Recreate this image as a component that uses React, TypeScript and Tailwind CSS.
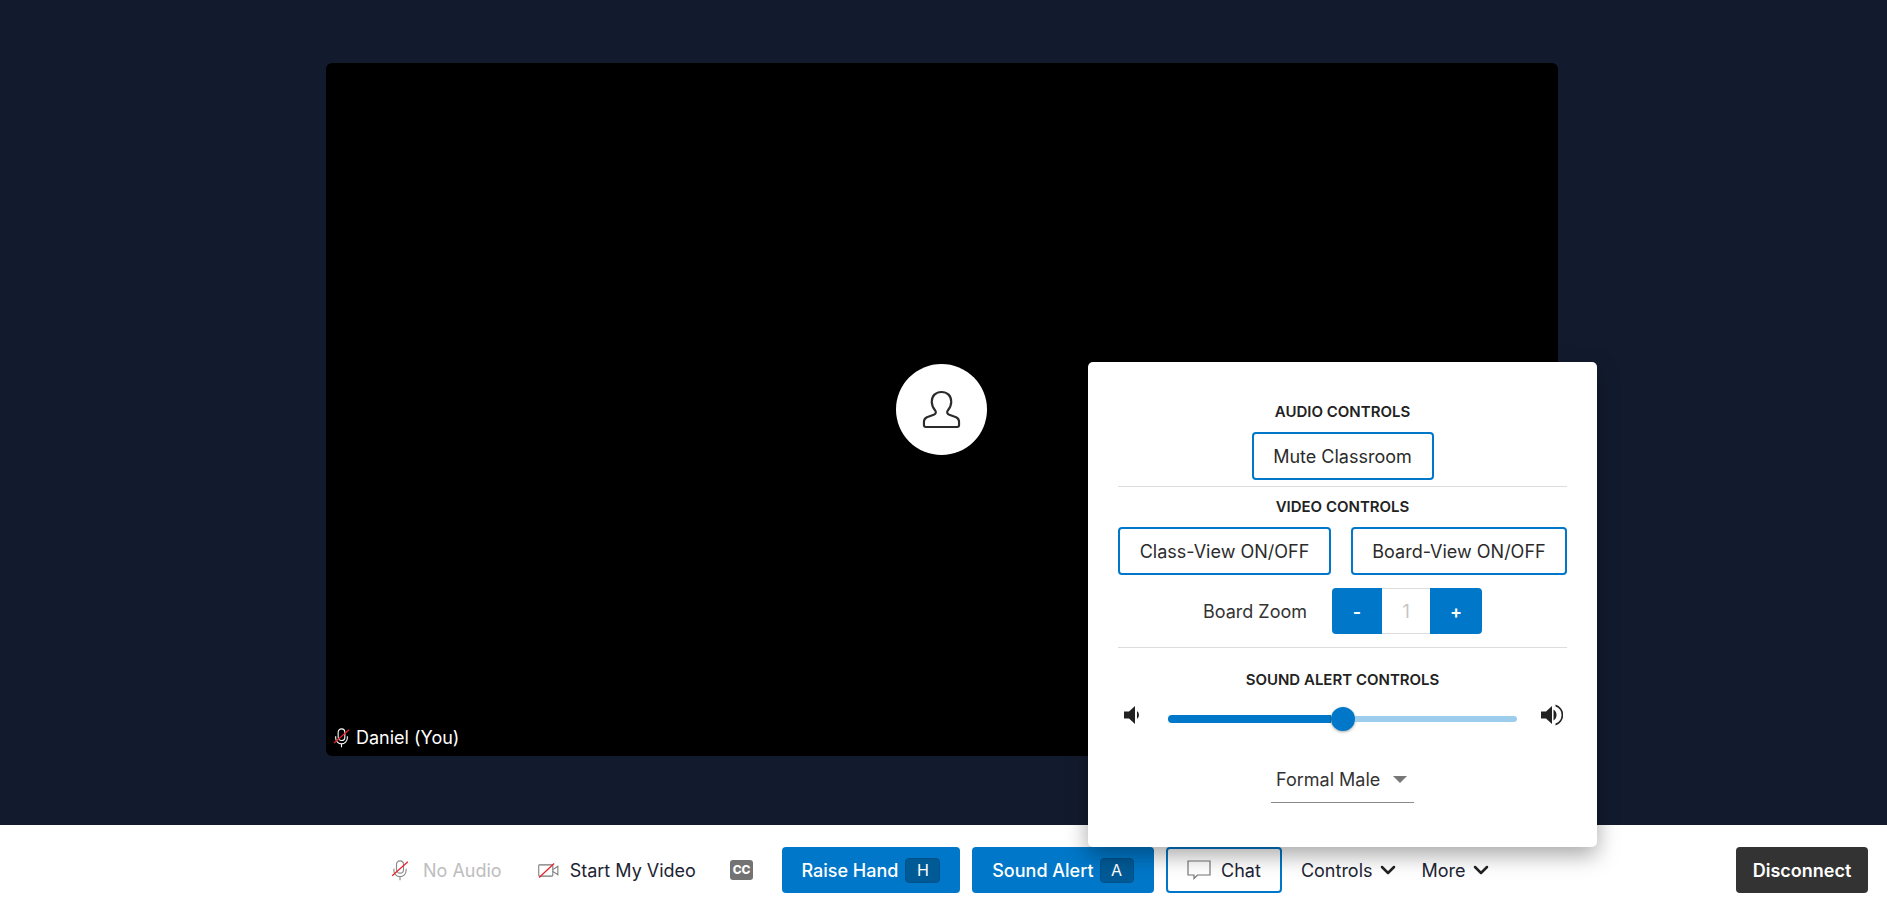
import React from 'react';
import { ChevronDown } from 'lucide-react';

const font = { fontFamily: 'Inter, "Noto Sans", sans-serif' };

function MicOff({ color = '#6b6b6b', className = '' }: { color?: string; className?: string }) {
    return (
        <svg viewBox="0 0 20 24" className={className} fill="none">
            <rect x="6" y="1" width="8" height="14" rx="4" stroke={color} strokeWidth="1.3" />
            <path d="M3 10v2a7 7 0 0 0 14 0v-2M10 19v4" stroke={color} strokeWidth="1.3" />
            <path d="M1 18 19 2" stroke="#e8202a" strokeWidth="1.5" />
        </svg>
    );
}

function SpeakerIcon({ loud }: { loud?: boolean }) {
    return (
        <svg viewBox="0 0 24 24" className="w-[24px] h-[24px]" fill="#222">
            <path d="M2 8.5h5L13 3v18l-6-5.500H2z" />
            {loud ? (
                <path d="M15 6.500a6.500 6.500 0 0 1 0 11zM17 1.500a11 11 0 0 1 0 21v-2a9 9 0 0 0 0-17z" transform="translate(-0.500 0)" />
            ) : (
                <path d="M15 8a5 5 0 0 1 0 8z" />
            )}
        </svg>
    );
}

function OutlineButton({ children, className = '' }: { children: React.ReactNode; className?: string }) {
    return (
        <button className={`h-[48px] border-2 border-[#0077c8] rounded-[4px] bg-white text-[18px] text-[#2b2b2b] flex items-center justify-center ${className}`}>
            {children}
        </button>
    );
}

function Heading({ children }: { children: React.ReactNode }) {
    return <h3 className="text-[15px] leading-[20px] font-semibold text-[#222] text-center">{children}</h3>;
}

function ControlsPopup() {
    return (
        <div className="absolute left-[1088px] top-[362px] w-[509px] h-[485px] bg-white rounded-[5px] px-[30px] pt-[40px] shadow-[0_8px_22px_rgba(0,0,0,0.35)] z-10">
            <Heading>AUDIO CONTROLS</Heading>
            <div className="flex justify-center mt-[10px]">
                <OutlineButton className="w-[182px]">Mute Classroom</OutlineButton>
            </div>
            <div className="h-px bg-[#dddddd] mt-[6px]" />
            <div className="mt-[10px]">
                <Heading>VIDEO CONTROLS</Heading>
            </div>
            <div className="flex gap-[20px] mt-[10px]">
                <OutlineButton className="w-[213px]">Class-View ON/OFF</OutlineButton>
                <OutlineButton className="w-[216px]">Board-View ON/OFF</OutlineButton>
            </div>
            <div className="flex items-center justify-center mt-[13px] gap-[25px]">
                <span className="text-[18px] text-[#333]">Board Zoom</span>
                <div className="flex h-[46px] w-[150px] text-[18px] font-semibold">
                    <button className="w-[50px] bg-[#0077c8] text-white rounded-l-[4px]">-</button>
                    <div className="w-[48px] border-y border-[#dddddd] flex items-center justify-center text-[#c4c4c4] font-normal">1</div>
                    <button className="w-[52px] bg-[#0077c8] text-white rounded-r-[4px]">+</button>
                </div>
            </div>
            <div className="h-px bg-[#dddddd] mt-[13px]" />
            <div className="mt-[22px]">
                <Heading>SOUND ALERT CONTROLS</Heading>
            </div>
            <div className="flex items-center mt-[17px] h-[24px]">
                <div className="w-[24px] ml-[4px] -mt-[8px]"><SpeakerIcon /></div>
                <div className="flex items-center ml-[22px] w-[349px]">
                    <div className="h-[8px] w-[163px] bg-[#0077c8] rounded-l-full" />
                    <div className="w-[24px] h-[24px] rounded-full bg-[#0077c8] shadow-[0_1px_3px_rgba(0,0,0,0.35)] shrink-0" />
                    <div className="h-[6px] flex-1 bg-[#9dcdec] rounded-r-full" />
                </div>
                <div className="w-[24px] ml-[22px] -mt-[8px]"><SpeakerIcon loud /></div>
            </div>
            <div className="flex justify-center mt-[26px]">
                <div className="w-[143px] h-[46px] border-b border-[#8a8a8a] flex items-center pl-[5px] gap-[13px] text-[18px] text-[#333]">
                    <span>Formal Male</span>
                    <span className="w-0 h-0 border-x-[7px] border-x-transparent border-t-[7px] border-t-[#777]" />
                </div>
            </div>
        </div>
    );
}

export default function App() {
    return (
        <div className="relative h-[907px] flex flex-col overflow-hidden bg-[#121b2e]" style={font}>
            <div className="flex-1 flex justify-center items-start pt-[63px] pr-[3px]">
                <div className="relative w-[1232px] h-[693px] bg-black rounded-[6px]">
                    <div className="absolute left-[570px] top-[301px] w-[91px] h-[91px] rounded-full bg-white flex items-center justify-center">
                        <svg viewBox="0 0 40 40" className="w-[39px] h-[39px]" fill="none" stroke="#2b2b2b" strokeWidth="2.200" strokeLinejoin="round">
                            <path d="M20 2C14 2 10 6 10 12 10 16 11.500 18.500 13.500 21 15 23 14 24.500 12 25.500L5 28C3 29 2 30.500 2 32.500V36C2 37.500 2.500 38 4 38H36C37.500 38 38 37.500 38 36V32.500C38 30.500 37 29 35 28L28 25.500C26 24.500 25 23 26.500 21 28.500 18.500 30 16 30 12 30 6 26 2 20 2Z" />
                        </svg>
                    </div>
                    <div className="absolute left-[7px] bottom-[5px] flex items-center gap-[6px] text-white text-[18px]">
                        <MicOff color="#ffffff" className="w-[17px] h-[20px]" />
                        <span>Daniel (You)</span>
                    </div>
                </div>
            </div>

            <div className="h-[82px] bg-white flex items-center pt-[8px] pl-[391px] pr-[19px] text-[18px] font-medium text-[#1c2433]">
                <div className="flex items-center gap-[14px] text-[#bdbdbd]">
                    <MicOff color="#8a8a8a" className="w-[18px] h-[21px]" />
                    <span className="font-normal">No Audio</span>
                </div>
                <div className="flex items-center gap-[11px] ml-[36px]">
                    <svg viewBox="0 0 22 16" className="w-[21px] h-[15px]" fill="none">
                        <rect x="0.600" y="2" width="15" height="12" rx="1" stroke="#777" strokeWidth="1.100" />
                        <path d="M15.500 7 21 3.500v9L15.500 9" stroke="#777" strokeWidth="1.100" />
                        <path d="M1 15.500 17 0.500" stroke="#e8202a" strokeWidth="1.300" />
                    </svg>
                    <span className="font-normal">Start My Video</span>
                </div>
                <div className="ml-[34px] w-[23px] h-[20px] rounded-[3px] bg-[#737373] flex items-center justify-center text-white text-[12px] font-extrabold tracking-tight">CC</div>
                <button className="ml-[29px] w-[178px] h-[46px] rounded-[4px] bg-[#0077c8] text-white flex items-center justify-center gap-[7px]">
                    Raise Hand
                    <span className="w-[35px] h-[25px] rounded-[4px] bg-[#005a96] border border-[#00518a] font-normal text-[16px] flex items-center justify-center">H</span>
                </button>
                <button className="ml-[12px] w-[182px] h-[46px] rounded-[4px] bg-[#0077c8] text-white flex items-center justify-center gap-[6px]">
                    Sound Alert
                    <span className="w-[34px] h-[25px] rounded-[4px] bg-[#005a96] border border-[#00518a] font-normal text-[16px] flex items-center justify-center">A</span>
                </button>
                <button className="ml-[12px] w-[116px] h-[46px] rounded-[4px] border-2 border-[#0077c8] flex items-center justify-center gap-[10px] font-normal">
                    <svg viewBox="0 0 24 20" className="w-[24px] h-[20px]" fill="none">
                        <path d="M1 1h22v14H10.500L7 18.500V15H1z" stroke="#777" strokeWidth="1.200" />
                    </svg>
                    Chat
                </button>
                <button className="ml-[19px] flex items-center gap-[3px] font-normal">
                    Controls
                    <ChevronDown className="w-[24px] h-[24px] text-[#222]" strokeWidth={2.500} />
                </button>
                <button className="ml-[22px] flex items-center gap-[3px] font-normal">
                    More
                    <ChevronDown className="w-[24px] h-[24px] text-[#222]" strokeWidth={2.500} />
                </button>
                <button className="ml-auto w-[132px] h-[46px] rounded-[4px] bg-[#333333] text-white font-semibold">Disconnect</button>
            </div>

            <ControlsPopup />
        </div>
    );
}
